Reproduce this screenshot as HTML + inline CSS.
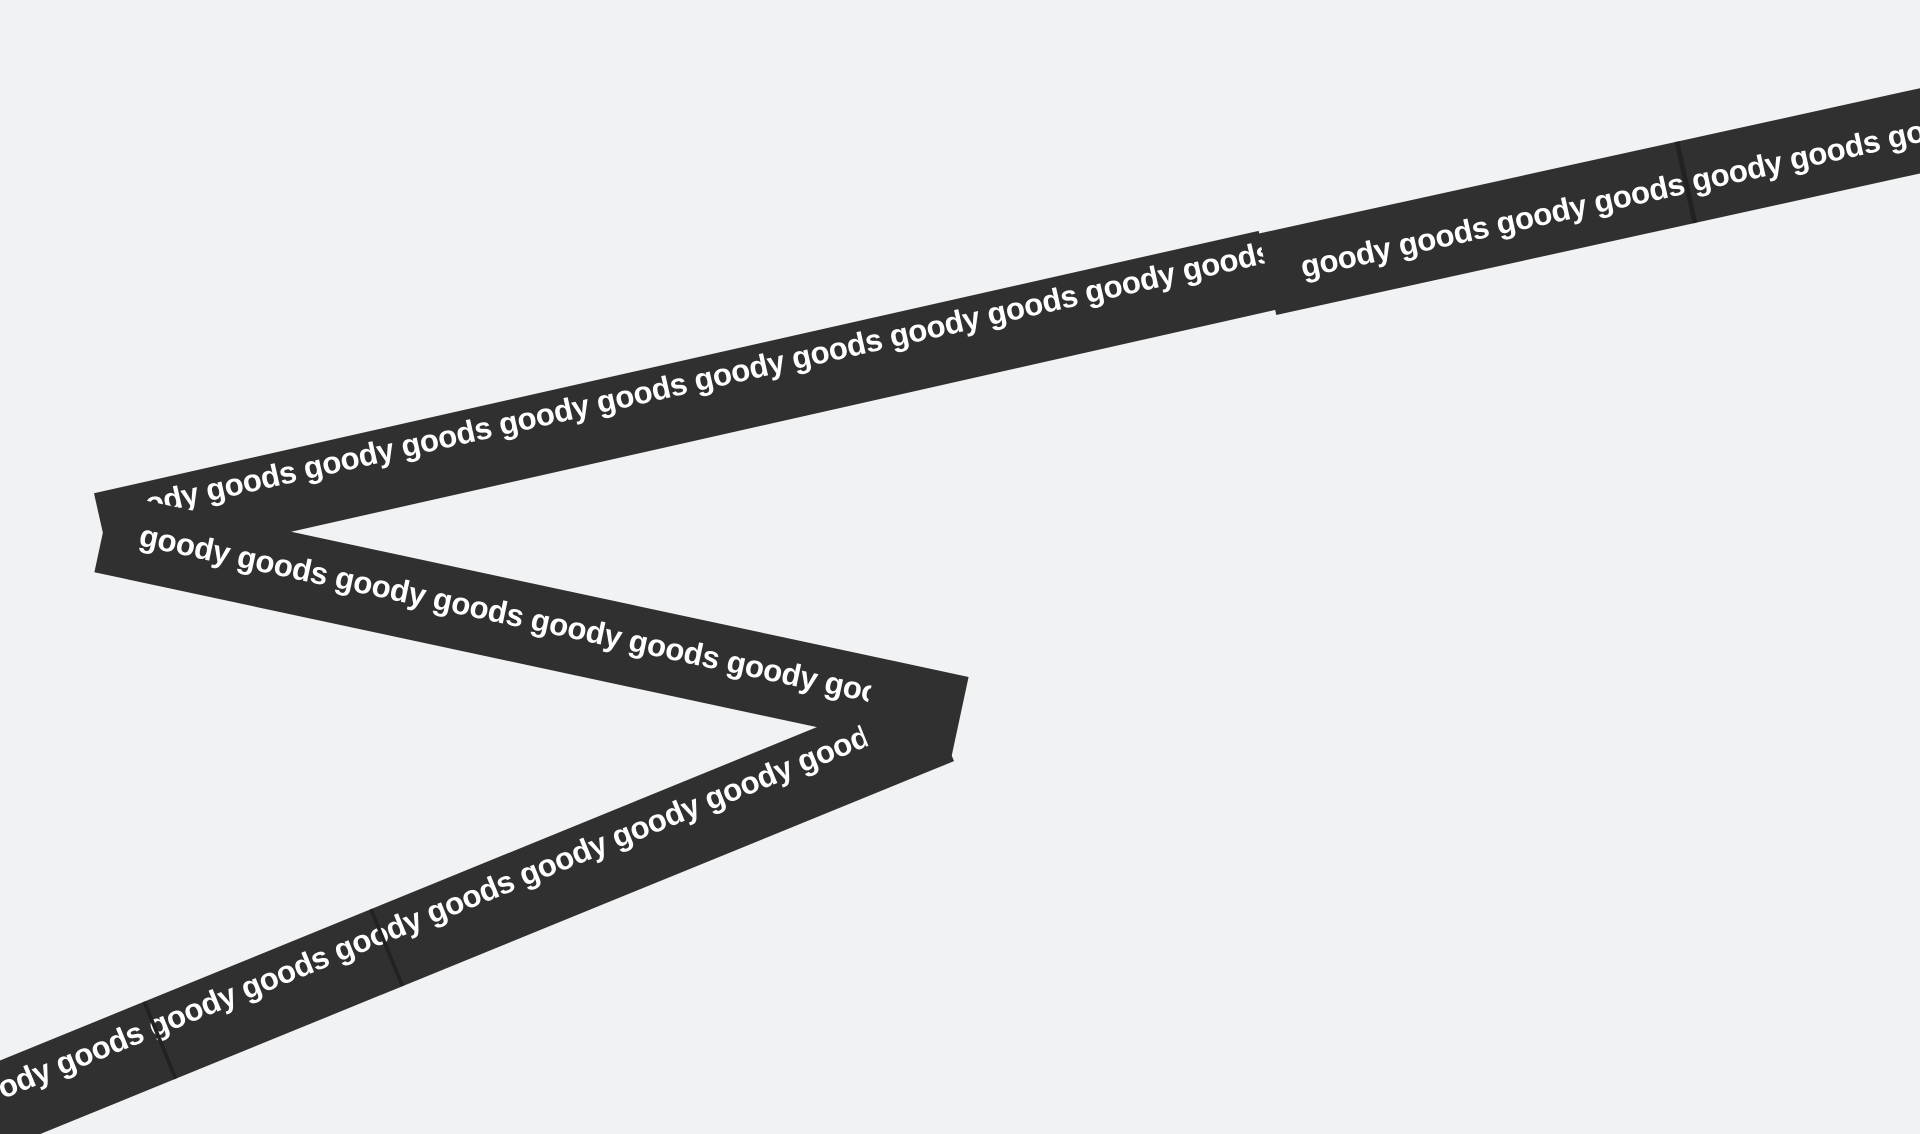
<!DOCTYPE html>
<html><head><meta charset="utf-8"><style>
html,body{margin:0;padding:0;background:#f1f2f4;width:1920px;height:1134px;overflow:hidden}
svg{display:block}
text{font-family:"Liberation Sans",sans-serif;font-weight:bold;font-size:25.5px;fill:#fff;letter-spacing:-0.3px}
</style></head><body>
<svg width="1920" height="1134" viewBox="0 0 1568 926" xmlns="http://www.w3.org/2000/svg">
<defs>
<clipPath id="c1" clipPathUnits="userSpaceOnUse"><rect x="0" y="-34" width="600" height="68"/></clipPath>
<clipPath id="c2" clipPathUnits="userSpaceOnUse"><rect x="0" y="-33" width="975" height="66"/></clipPath>
<clipPath id="c3" clipPathUnits="userSpaceOnUse"><rect x="0" y="-33" width="640" height="66"/></clipPath>
<clipPath id="c4" clipPathUnits="userSpaceOnUse"><rect x="0" y="-34" width="800" height="68"/></clipPath>
</defs>
<!-- band 2 -->
<g transform="translate(84,435) rotate(-12.7)">
<rect x="0" y="-33" width="975" height="66" fill="#303030"/>
<g clip-path="url(#c2)"><text x="8" y="-6">goody goods goody goods goody goods goody goods goody goods goody goodsgoody goods</text></g>
</g>
<!-- band 1 -->
<g transform="translate(1035,224) rotate(-12.4)">
<rect x="0" y="-34" width="600" height="68" fill="#303030"/>
<g clip-path="url(#c1)"><text x="28" y="9">goody goods goody goods goody goods goody goods</text></g>
<rect x="348" y="-34" width="4" height="68" fill="#222"/>
</g>
<!-- band 3 -->
<g transform="translate(84,435) rotate(12.1)">
<rect x="0" y="-33" width="716" height="66" fill="#303030"/>
<g clip-path="url(#c3)"><text x="30" y="4">goody goods goody goods goody goods goody goods</text></g>
</g>
<!-- band 4 -->
<g transform="translate(-30,915) rotate(-22.2)">
<rect x="0" y="-34" width="860" height="68" fill="#303030"/>
<g clip-path="url(#c4)"><text x="6" y="-4">goody goods goody goods goody goods goody goody goody goody</text></g>
<rect x="172" y="-34" width="3" height="68" fill="#222"/>
<rect x="372" y="-34" width="3" height="68" fill="#222"/>
</g>
</svg>
</body></html>
